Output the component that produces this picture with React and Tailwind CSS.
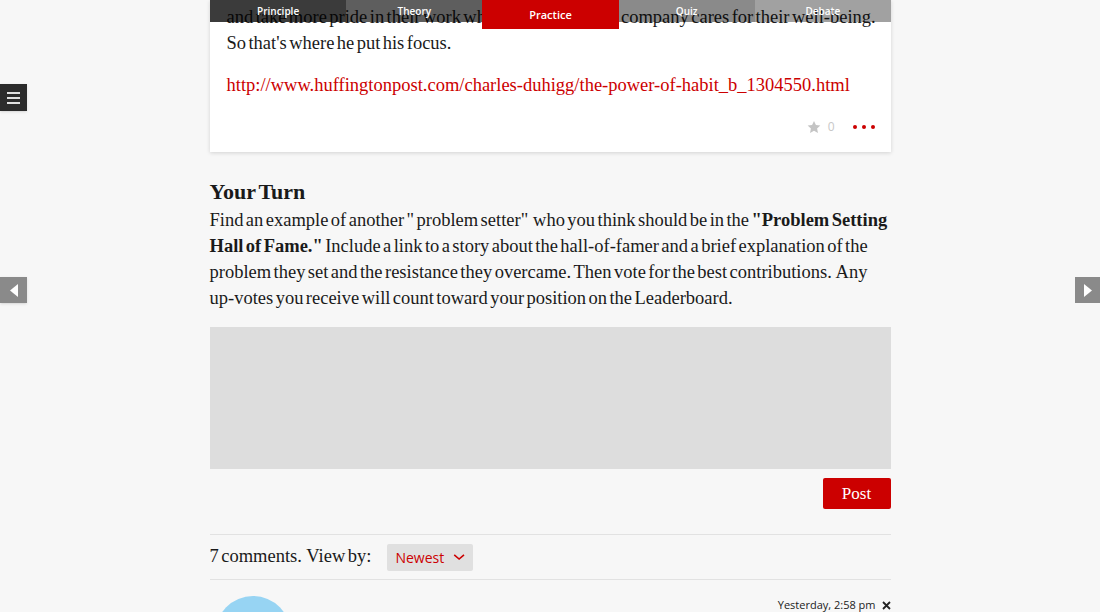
import React from "react";

const tabs = [
  { label: "Principle", cls: "bg-black/[0.77] h-[22px] text-[10px] pt-[6px]" },
  { label: "Theory", cls: "bg-black/[0.63] h-[22px] text-[10px] pt-[6px]" },
  { label: "Practice", cls: "bg-[#cc0000] h-[29px] text-[11px] pt-[9px]" },
  { label: "Quiz", cls: "bg-black/[0.46] h-[22px] text-[10px] pt-[6px]" },
  { label: "Debate", cls: "bg-black/[0.37] h-[22px] text-[10px] pt-[6px]" },
];

const serif = { fontFamily: '"Liberation Serif", "DejaVu Serif", serif', wordSpacing: "-2.2px" };
const sans = { fontFamily: '"Open Sans", "Liberation Sans", sans-serif', wordSpacing: "0px" };

const App = () => {
  return (
    <div className="min-h-screen bg-[#f7f7f7] relative overflow-hidden" style={serif}>
      {/* Section tabs */}
      <div className="absolute top-0 left-[210px] w-[681px] flex items-start z-20" style={sans}>
        {tabs.map((t) => (
          <div key={t.label} className={`flex-1 text-center text-white font-semibold leading-none ${t.cls}`}>
            {t.label}
          </div>
        ))}
      </div>

      {/* Side controls */}
      <div className="absolute left-0 top-[84px] w-[27px] h-[27px] bg-[#2b2b2b] flex flex-col items-center justify-center gap-[3px] shadow">
        <span className="block w-[13px] h-[2px] bg-[#e0e0e0]" />
        <span className="block w-[13px] h-[2px] bg-[#e0e0e0]" />
        <span className="block w-[13px] h-[2px] bg-[#e0e0e0]" />
      </div>
      <div className="absolute left-0 top-[277px] w-[27px] h-[26px] bg-[#8a8a8a] flex items-center justify-center shadow">
        <svg width="8" height="13" viewBox="0 0 8 13"><path d="M8 0 L0 6.5 L8 13 Z" fill="#fff" /></svg>
      </div>
      <div className="absolute right-0 top-[277px] w-[25px] h-[26px] bg-[#8a8a8a] flex items-center justify-center">
        <svg width="8" height="13" viewBox="0 0 8 13"><path d="M0 0 L8 6.5 L0 13 Z" fill="#fff" /></svg>
      </div>

      <div className="w-[681px] mx-auto text-[18.5px] text-[#1a1a1a]">
        {/* Previous contribution card */}
        <div className="bg-white shadow-[0_1px_4px_rgba(0,0,0,0.15)] px-[17px] pt-[4px] pb-[16px]">
          <p className="leading-[26px] whitespace-nowrap">
            and take more pride in their work when they believe the company cares for their well-being.
            <br />
            So that's where he put his focus.
          </p>
          <p className="leading-[26px] mt-[16px] text-[#cc0000] whitespace-nowrap">
            http://www.huffingtonpost.com/charles-duhigg/the-power-of-habit_b_1304550.html
          </p>
          <div className="flex justify-end items-center mt-[20px] gap-[7px]">
            <svg width="14" height="14" viewBox="0 0 24 24">
              <path d="M12 1.5l3.3 7 7.6.9-5.6 5.2 1.5 7.6L12 18.4l-6.8 3.8 1.5-7.6L1.1 9.4l7.6-.9z" fill="#c4c4c4" />
            </svg>
            <span className="text-[12px] text-[#c8c8c8] mr-[11px]" style={sans}>0</span>
            <div className="flex gap-[5px] mr-[-1px]">
              <span className="w-[4px] h-[4px] rounded-full bg-[#cc0000]" />
              <span className="w-[4px] h-[4px] rounded-full bg-[#cc0000]" />
              <span className="w-[4px] h-[4px] rounded-full bg-[#cc0000]" />
            </div>
          </div>
        </div>

        {/* Your turn */}
        <h2 className="mt-[27px] text-[22px] font-bold leading-[26px]">Your Turn</h2>
        <p className="leading-[26px] mt-[2px] whitespace-nowrap">
          Find an example of another " problem setter"&nbsp; who you think should be in the <b>"Problem Setting</b>
          <br />
          <b>Hall of Fame."</b> Include a link to a story about the hall-of-famer and a brief explanation of the
          <br />
          problem they set and the resistance they overcame.&nbsp;Then vote for the best contributions.&nbsp; Any
          <br />
          up-votes you receive will count toward your position on the Leaderboard.
        </p>

        <div className="mt-[16px] h-[142px] bg-[#dddddd]" />
        <div className="flex justify-end mt-[9px]">
          <button className="w-[68px] h-[31px] bg-[#cc0000] text-white text-[17px] rounded-[2px]">Post</button>
        </div>

        <div className="mt-[25px] border-t border-[#e2e2e2]" />
        <div className="flex items-center h-[44px] gap-[16px]">
          <span>7 comments.&nbsp; View by:</span>
          <div className="flex items-center gap-[9px] bg-[#e0e0e0] h-[27px] px-[8px] w-[86px] rounded-[2px] text-[#cc0000] text-[14px]" style={sans}>
            Newest
            <svg width="15" height="8" viewBox="0 0 15 8">
              <path d="M1.5 1.5 L7.5 6.5 L13.5 1.5" stroke="#cc0000" strokeWidth="2" fill="none" />
            </svg>
          </div>
        </div>
        <div className="border-t border-[#e2e2e2]" />

        <div className="flex justify-between items-start pt-[16px]">
          <div className="w-[76px] h-[76px] rounded-full bg-[#97d4f3] ml-[5px]" />
          <div className="flex items-center gap-[6px] text-[11px] text-[#222] mt-[1px]" style={sans}>
            Yesterday, 2:58 pm
            <svg width="9" height="9" viewBox="0 0 9 9">
              <path d="M1 1 L8 8 M8 1 L1 8" stroke="#222" strokeWidth="1.8" />
            </svg>
          </div>
        </div>
      </div>
    </div>
  );
};

export default App;
